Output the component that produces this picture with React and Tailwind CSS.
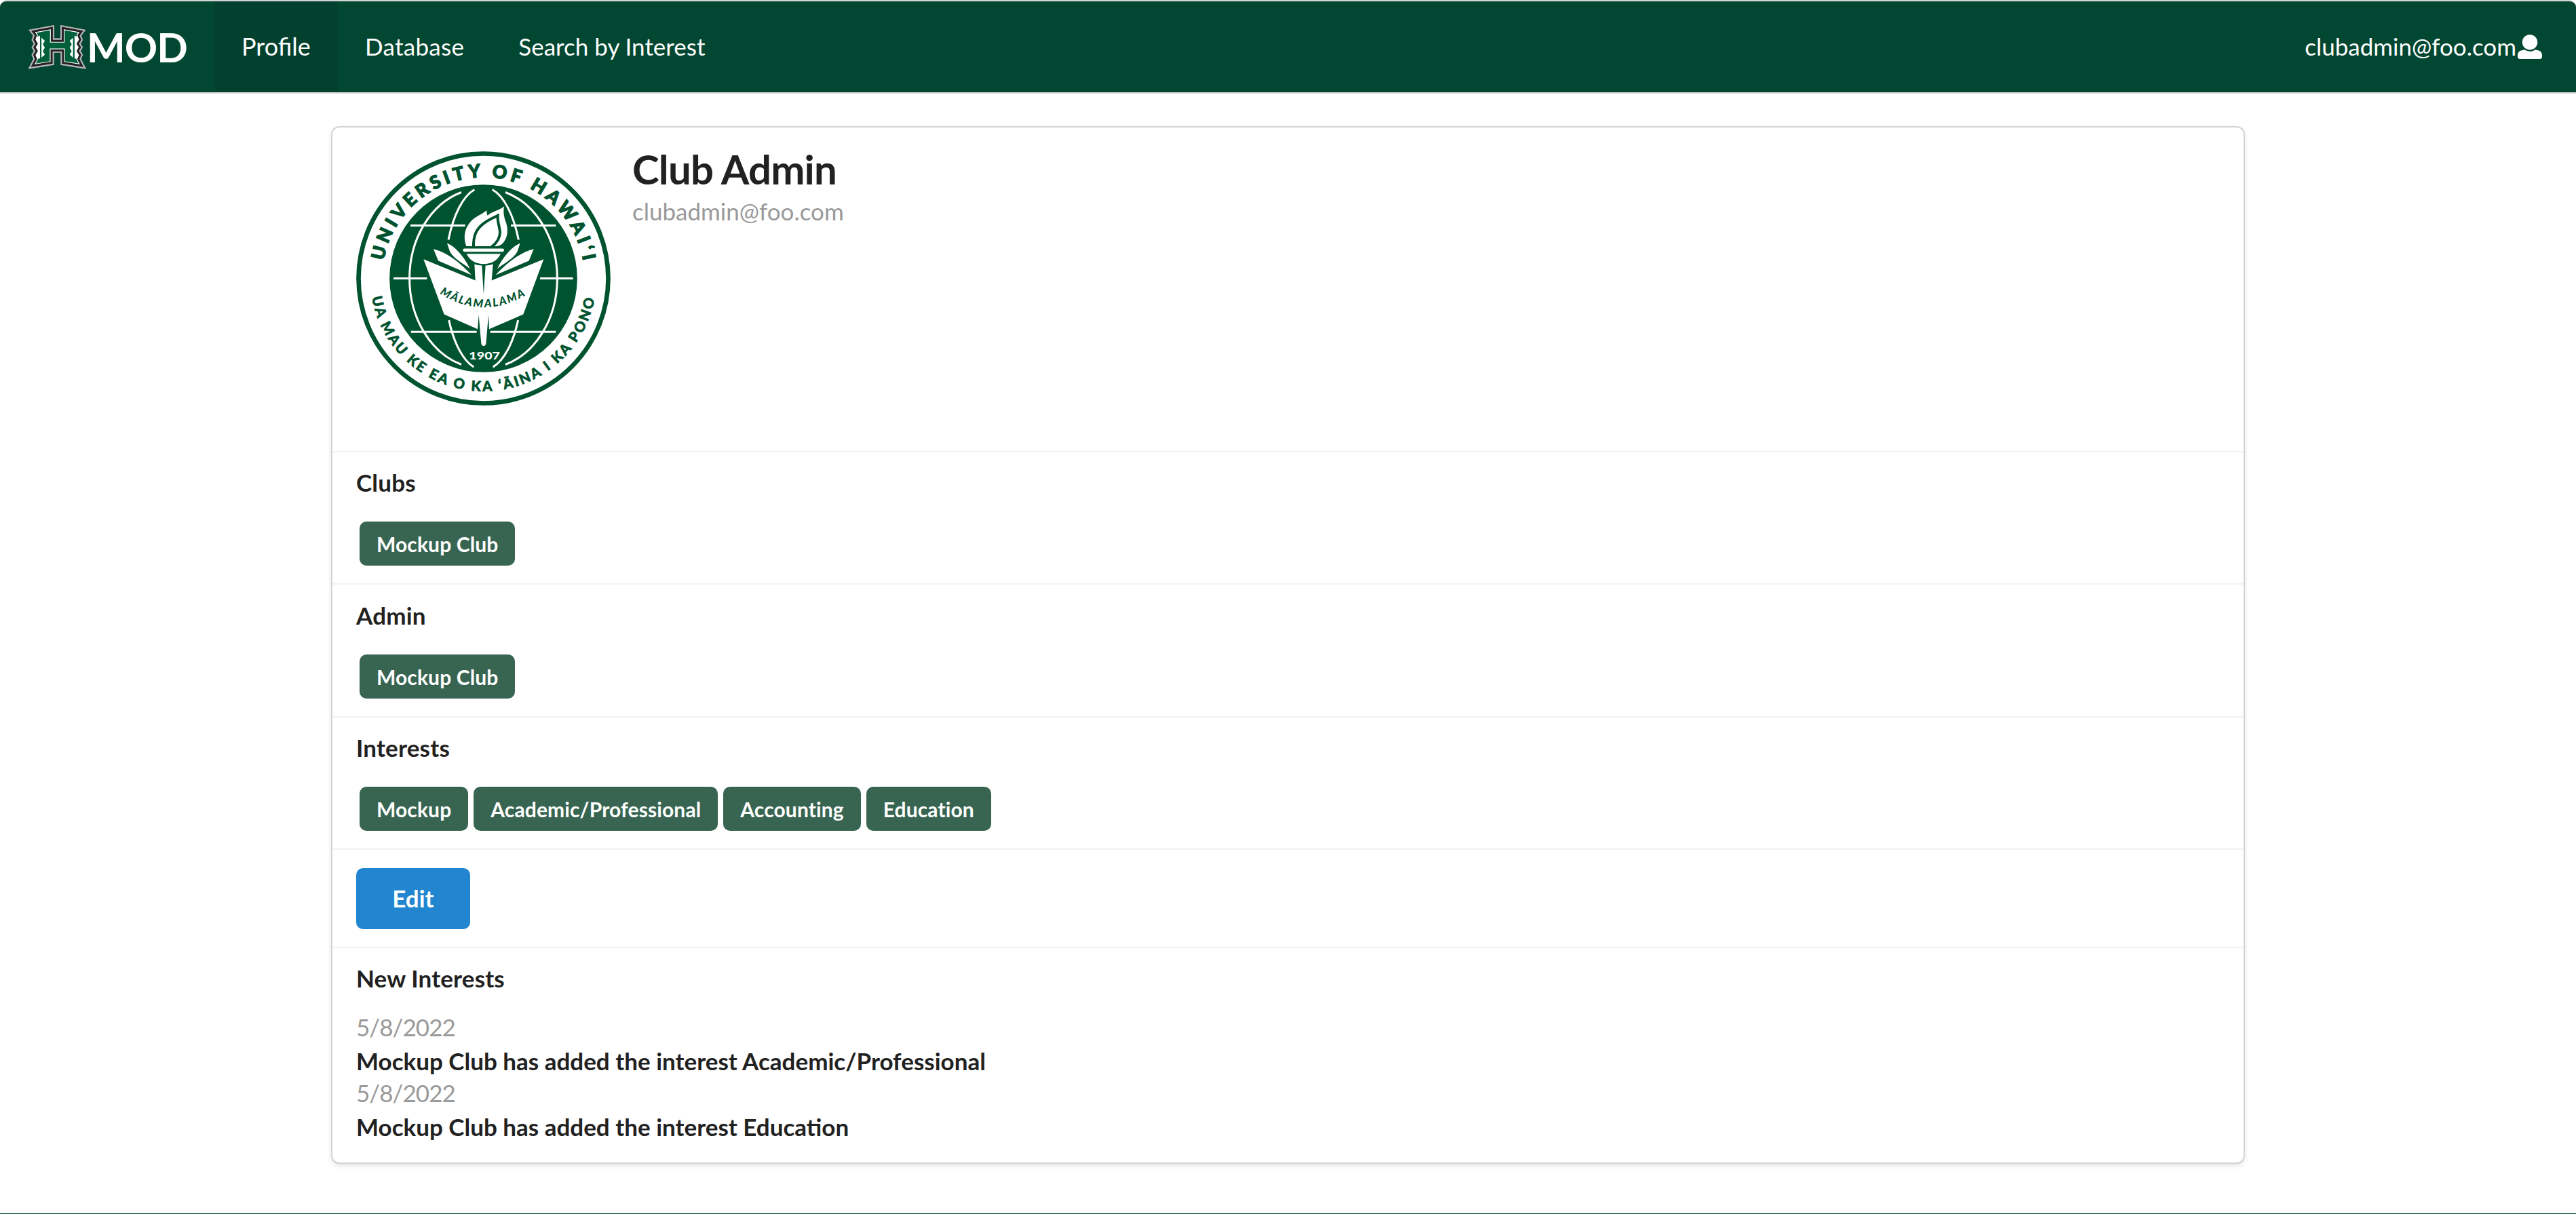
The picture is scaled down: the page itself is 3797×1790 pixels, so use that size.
const H_OUTLINE =
  "66,72 180,51 180,110 207,110 207,51 320,72 300,98 307,117 297,134 307,150 297,166 307,183 299,202 322,246 208,228 208,174 179,174 179,228 64,246 87,202 79,183 89,166 79,150 89,134 79,117 86,98";

function HLogo() {
  const side = (
    <>
      <path d="M90 108 L117 98 L117 199 L90 206Z" fill="#fff" />
      <path d="M123 107 L138 121 L129 136 L138 151 L129 167 L138 182 L123 196Z" fill="#fff" />
      <path d="M120 98V200" stroke="#00583a" strokeWidth="5" />
    </>
  );
  return (
    <svg viewBox="60 48 264 202" className="h-[67px] w-[88px] shrink-0">
      <defs>
        <clipPath id="h-clip">
          <polygon points={H_OUTLINE} />
        </clipPath>
      </defs>
      <g clipPath="url(#h-clip)">
        <polygon points={H_OUTLINE} fill="#00603c" />
        {side}
        <g transform="translate(386.5 0) scale(-1 1)">{side}</g>
        <g fill="none">
          <polygon points={H_OUTLINE} stroke="#fff" strokeWidth="38" />
          <polygon points={H_OUTLINE} stroke="#231f20" strokeWidth="31" />
          <polygon points={H_OUTLINE} stroke="#b3b5b8" strokeWidth="13" />
        </g>
      </g>
    </svg>
  );
}

function Seal() {
  const pages = (
    <>
      <path d="M87 231 C145 245 205 290 255 346 L108 283Z" />
      <path d="M147 206 C185 220 225 270 248 318 C210 290 180 275 160 244Z" />
    </>
  );
  return (
    <svg viewBox="135 158.5 1125 1125" className="size-[375px] shrink-0">
      <defs>
        <path id="arc-top" d="M256.4 643 A448 448 0 0 1 1138.6 643" />
        <path id="arc-bottom" d="M204.6 804 A500 500 0 0 0 1190.4 804" />
        <path id="arc-book" d="M114 428 Q308 550 508 428" />
      </defs>
      <circle cx="697.5" cy="721" r="552" fill="#fff" stroke="#00532f" strokeWidth="20" />
      <circle cx="697.5" cy="721" r="415" fill="#00532f" />
      <g fill="none" stroke="#fff" strokeWidth="9">
        <path d="M600 340 A326 399 0 0 0 600 1102" />
        <path d="M795 340 A326 399 0 0 1 795 1102" />
        <path d="M658 328 A172 406 0 0 0 543 550" />
        <path d="M737 328 A172 406 0 0 1 853 550" />
        <path d="M545 906 A172 406 0 0 0 655 1113" />
        <path d="M851 906 A172 406 0 0 1 740 1113" />
        <path d="M375 487H617M819 487H1018M300 721H448M948 721H1094M377 957H668M728 957H1018" />
      </g>
      <g transform="translate(390 360)" fill="#fff">
        <path d="M232 219 C218 180 222 140 255 105 C275 85 300 78 322 60 C322 70 323 77 326 83 C345 65 372 62 399 43 C394 75 400 92 408 115 C420 155 412 185 394 205 C384 215 374 219 360 219Z" />
        <path
          d="M264 225 C262 172 276 144 306 120 C328 102 350 94 371 83 C369 112 379 130 381 155 C382 184 366 204 344 222"
          fill="none"
          stroke="#00532f"
          strokeWidth="12"
        />
        <rect x="214" y="219" width="188" height="14" fill="#00532f" />
        <rect x="217" y="229" width="182" height="14" rx="7" />
        <path d="M233 252H384C370 282 342 297 308.500 297S247 282 233 252Z" />
        {pages}
        <g transform="translate(617 0) scale(-1 1)">{pages}</g>
        <path d="M43 276 L272 370 L268 298 C278 302 290 304 301 304 L308.500 430 L317 304 C328 304 340 302 350 298 L344 370 L574 276 L484 520 L333 585 L330 523 L319 650 Q317 660 308.500 660 Q300 660 298 650 L287 523 L282 585 L134 520Z" />
        <text fill="#00532f" fontFamily="Lato, sans-serif" fontWeight="900" fontSize="50" fontStyle="italic">
          <textPath href="#arc-book" textLength="402" lengthAdjust="spacing">MĀLAMALAMA</textPath>
        </text>
      </g>
      <text x="634" y="1079" fill="#fff" fontFamily="Lato, sans-serif" fontWeight="900" fontSize="44" textLength="137" lengthAdjust="spacingAndGlyphs">
        1907
      </text>
      <g fill="#00532f" stroke="#00532f" fontFamily="Lato, sans-serif" fontWeight="900">
        <text fontSize="80" strokeWidth="4">
          <textPath href="#arc-top" textLength="1250" lengthAdjust="spacing">UNIVERSITY OF HAWAIʻI</textPath>
        </text>
        <text fontSize="62" strokeWidth="2">
          <textPath href="#arc-bottom" textLength="1394" lengthAdjust="spacing">UA MAU KE EA O KA ʻĀINA I KA PONO</textPath>
        </text>
      </g>
    </svg>
  );
}

function UserIcon() {
  return (
    <svg viewBox="0 0 512 512" fill="currentColor" className="ml-[2px] size-9">
      <path d="M256 0c88.366 0 160 71.634 160 160s-71.634 160-160 160S96 248.366 96 160 167.634 0 256 0zm183.283 333.821l-71.313-17.828c-74.923 53.89-165.738 41.864-223.94 0l-71.313 17.828C29.981 344.505 0 382.903 0 426.955V464c0 26.51 21.49 48 48 48h416c26.51 0 48-21.49 48-48v-37.045c0-44.052-29.981-82.45-72.717-93.134z" />
    </svg>
  );
}

function LabelSection({ title, labels, className }) {
  return (
    <section className={`border-t-2 border-[#f2f2f2] px-[35px] ${className}`}>
      <h2 className="font-bold tracking-[0.2px]">{title}</h2>
      <div className="mt-[33px] ml-[5px] flex gap-2">
        {labels.map((label) => (
          <span
            key={label}
            className="flex h-[65px] items-center rounded-[10px] bg-[#386551] px-[25px] text-[30px] leading-[30px] font-bold tracking-[0.12px] text-white"
          >
            {label}
          </span>
        ))}
      </div>
    </section>
  );
}

const EVENTS = [
  { date: "5/8/2022", text: "Mockup Club has added the interest Academic/Professional" },
  { date: "5/8/2022", text: "Mockup Club has added the interest Education" },
];

export default function App() {
  return (
    <div className="flex h-[1790px] flex-col overflow-hidden bg-white font-['Lato',sans-serif] text-[35px] leading-[50px] text-[#212121]">
      <nav className="flex h-[138px] shrink-0 rounded-t-[10px] border-y-2 border-[#d4d4d5] bg-[#024731] text-white">
        <a className="flex w-[316px] items-center pl-10">
          <HLogo />
          <span className="text-[60px] leading-[60px] font-bold tracking-[-1px]">MOD</span>
        </a>
        <a className="flex w-[182px] items-center bg-[#03412e] pb-[2px] pl-10 text-[36px]">Profile</a>
        <a className="flex items-center px-10 pb-[2px] tracking-[0.3px]">Database</a>
        <a className="flex items-center px-10 pb-[2px]">Search by Interest</a>
        <a className="ml-auto flex items-center pr-[50px]">
          <span className="pb-[2px]">clubadmin@foo.com</span>
          <UserIcon />
        </a>
      </nav>

      <main className="mx-auto mt-[50px] w-[2817px] rounded-[10px] bg-white shadow-[0_0_0_2px_#d4d4d5,0_3px_8px_0_#d4d4d5]">
        <header className="flex h-[477px] px-[35px]">
          <div className="pt-[35px]">
            <Seal />
          </div>
          <div className="ml-[32px] pt-[25px]">
            <h1 className="text-[60px] leading-[72px] font-bold tracking-[-0.85px]">Club Admin</h1>
            <p className="mt-px text-[#999]">clubadmin@foo.com</p>
          </div>
        </header>
        <LabelSection title="Clubs" labels={["Mockup Club"]} className="h-[195px] pt-[19px]" />
        <LabelSection title="Admin" labels={["Mockup Club"]} className="h-[196px] pt-5" />
        <LabelSection
          title="Interests"
          labels={["Mockup", "Academic/Professional", "Accounting", "Education"]}
          className="h-[195px] pt-[19px]"
        />
        <section className="h-[145px] border-t-2 border-[#f2f2f2] px-[35px] pt-[27px]">
          <button className="h-[90px] w-[168px] rounded-[10px] bg-[#2185d0] pb-[2px] font-bold text-white">Edit</button>
        </section>
        <section className="h-[318px] border-t-2 border-[#f2f2f2] px-[35px] pt-[19px]">
          <h2 className="mb-[22px] font-bold tracking-[0.15px]">New Interests</h2>
          {EVENTS.map((event) => (
            <div key={event.text} className="h-[97px]">
              <p className="tracking-[-0.95px] text-[#999]">{event.date}</p>
              <p className="font-bold">{event.text}</p>
            </div>
          ))}
        </section>
      </main>

      <div className="mt-auto h-px shrink-0 bg-[#024731]" />
    </div>
  );
}
